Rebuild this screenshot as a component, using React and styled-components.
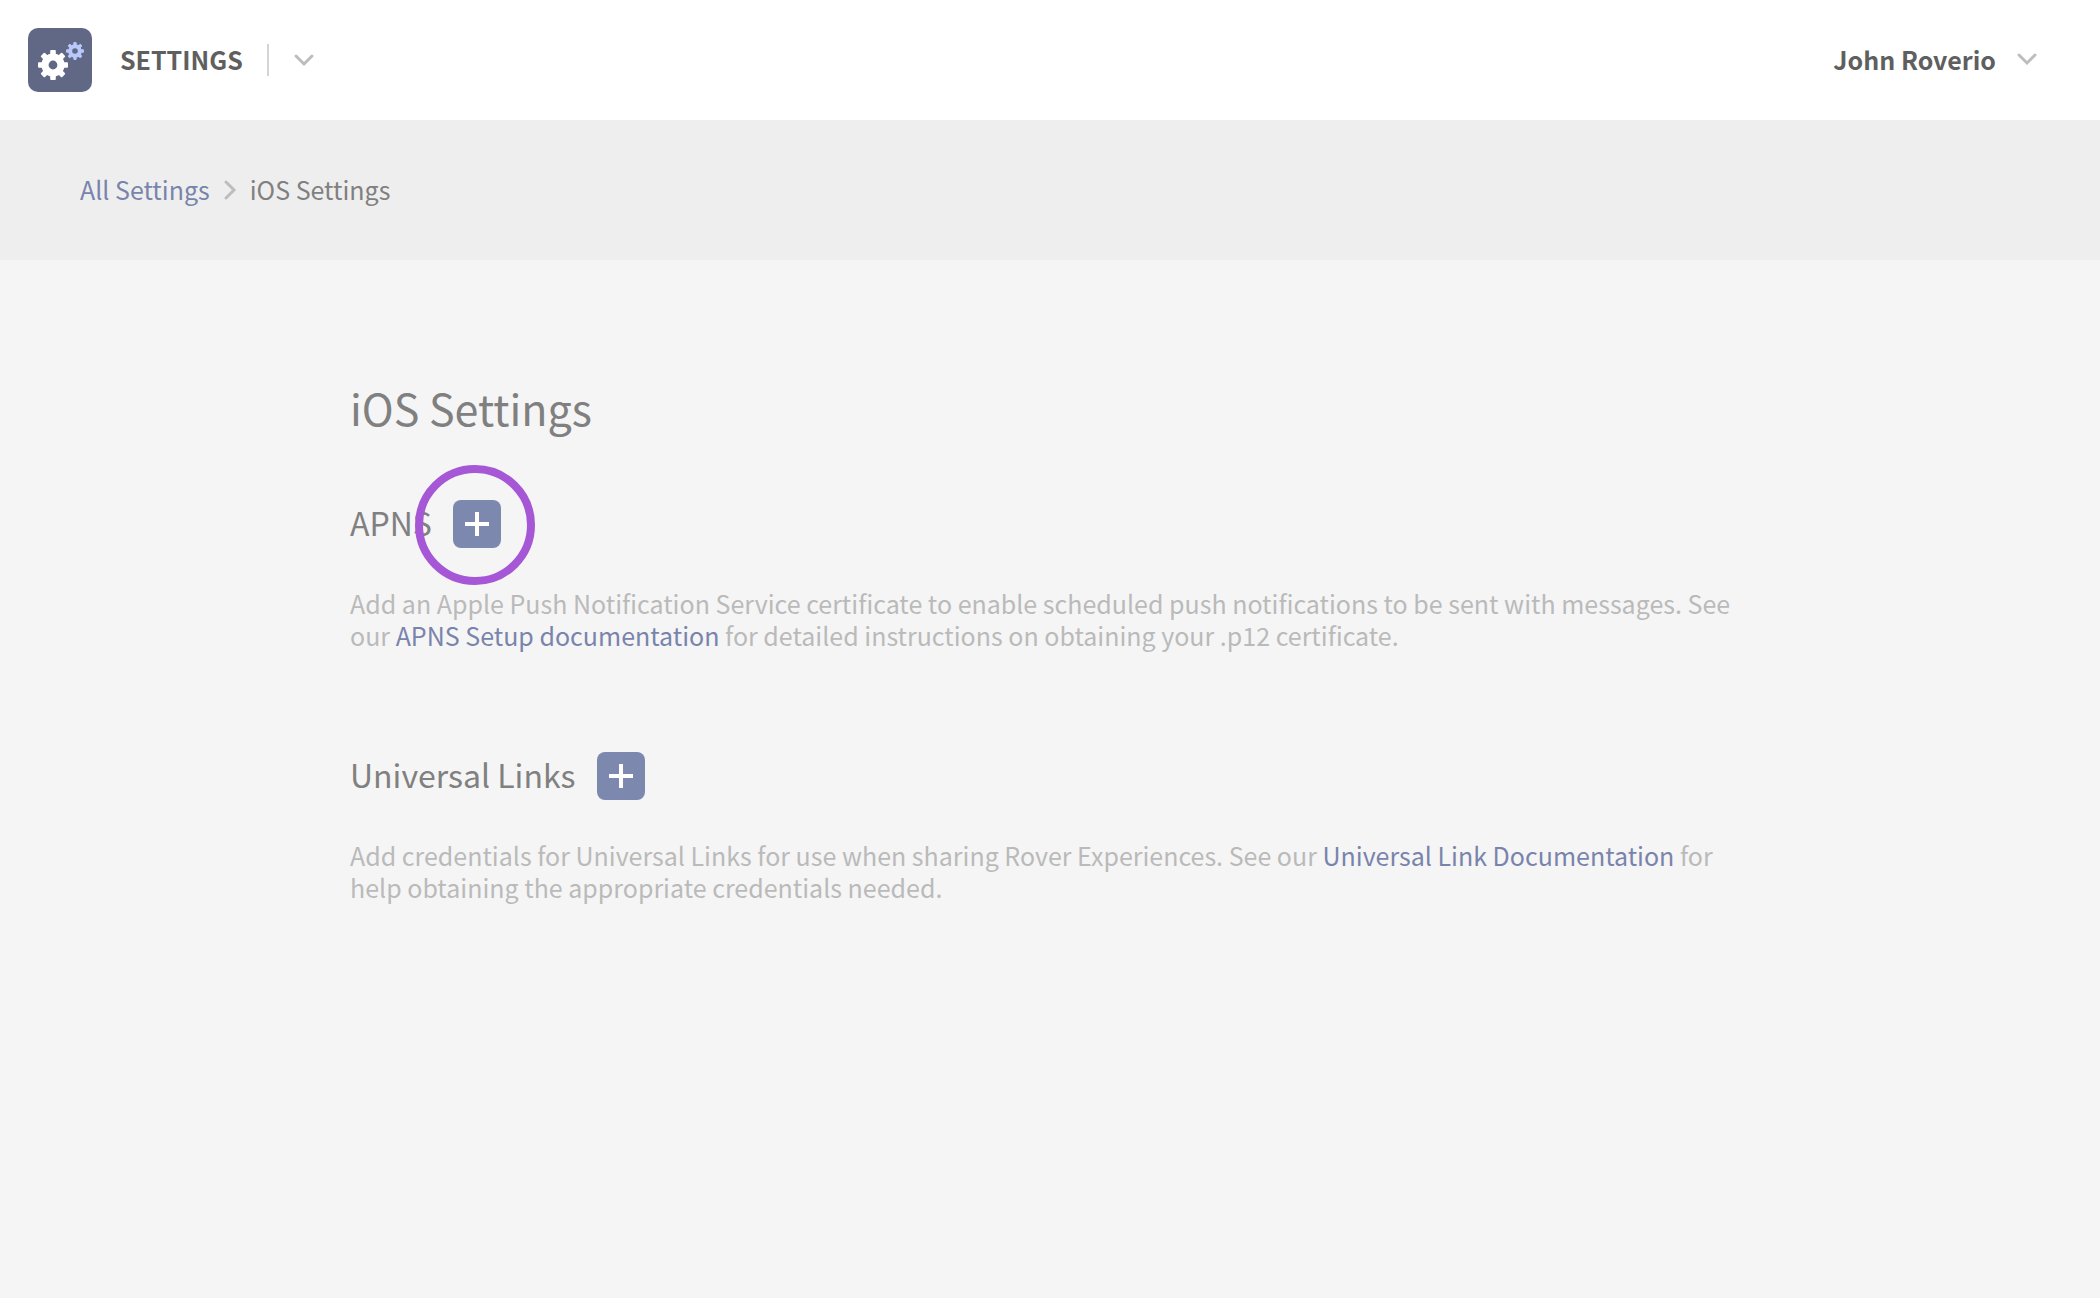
import React from "react";
import styled, { createGlobalStyle } from "styled-components";

const GlobalStyle = createGlobalStyle`
  *, *::before, *::after { box-sizing: border-box; }
  html { background: #f5f5f5; }
  body {
    margin: 0;
    background: #f5f5f5;
    color: #808080;
    font-family: "Noto Sans CJK SC", "Noto Sans", sans-serif;
    font-size: 25px;
    line-height: 32px;
  }
  button {
    margin: 0;
    padding: 0;
    border: 0;
    background: none;
    color: inherit;
    font: inherit;
    cursor: pointer;
  }
`;

const Header = styled.header`
  display: flex;
  align-items: center;
  justify-content: space-between;
  height: 120px;
  padding: 0 62px 0 28px;
  background: #ffffff;
  color: #5f5f5f;
  font-weight: 700;
`;

const Brand = styled.div`
  display: flex;
  align-items: center;
`;

const Logo = styled.svg`
  display: block;
  width: 64px;
  height: 64px;
  margin-right: 28px;
`;

const Label = styled.span`
  padding-bottom: 2px;
`;

const Divider = styled.span`
  width: 2px;
  height: 32px;
  margin: 0 24px;
  background: #d4d4d4;
`;

const IconButton = styled.button`
  display: flex;
`;

const UserButton = styled.button`
  && {
    display: flex;
    align-items: center;
    gap: 20px;
    padding-bottom: 2px;
    font-weight: 700;
  }
`;

const Icon = styled.svg`
  display: block;
  width: ${(p) => p.$width}px;
  height: ${(p) => p.$height}px;
  fill: none;
  stroke: #bdbdbd;
  stroke-width: 3;
  stroke-linecap: round;
`;

const Breadcrumbs = styled.nav`
  display: flex;
  align-items: center;
  gap: 12px;
  height: 140px;
  padding: 0 80px;
  background: #eeeeee;
`;

const Link = styled.a`
  color: #7984ac;
  text-decoration: none;
`;

const Main = styled.main`
  max-width: 1400px;
  margin: 0 auto;
  padding-top: 116px;
`;

const Title = styled.h1`
  margin: 0 0 62px;
  font-size: 43px;
  font-weight: 400;
  line-height: 62px;
`;

const Section = styled.section`
  margin-bottom: 101px;
`;

const SectionHead = styled.div`
  display: flex;
  align-items: flex-start;
  gap: 21px;
  margin-bottom: 39px;
`;

const SectionTitle = styled.h2`
  margin: 0;
  font-size: 32px;
  font-weight: 400;
  line-height: 44px;
`;

const AddSlot = styled.div`
  position: relative;
`;

const AddButton = styled.button`
  && {
    display: grid;
    place-items: center;
    width: 48px;
    height: 48px;
    border-radius: 8px;
    background: #7d88ae;
  }
`;

const Plus = styled.svg`
  width: 24px;
  height: 24px;
  stroke: #ffffff;
  stroke-width: 4;
`;

const Ring = styled.span`
  position: absolute;
  top: -35px;
  left: -38px;
  width: 120px;
  height: 120px;
  border: 8px solid #a557d6;
  border-radius: 50%;
  pointer-events: none;
`;

const Description = styled.p`
  margin: 0;
  color: #bababa;
`;

const ANGLES = [0, 45, 90, 135, 180, 225, 270, 315];

function Gear({ x, y, outer, body, hole, tooth, fill }) {
  return (
    <g transform={`translate(${x} ${y})`}>
      {ANGLES.map((a) => (
        <rect
          key={a}
          x={-tooth / 2}
          y={-outer}
          width={tooth}
          height={outer - hole}
          rx="1"
          fill={fill}
          transform={`rotate(${a})`}
        />
      ))}
      <circle r={body} fill={fill} />
      <circle r={hole} fill="#606886" />
    </g>
  );
}

function SettingsLogo() {
  return (
    <Logo viewBox="0 0 64 64" aria-hidden="true">
      <rect width="64" height="64" rx="10" fill="#606886" />
      <Gear x={25} y={37} outer={15} body={11.6} hole={4.4} tooth={5.6} fill="#ffffff" />
      <Gear x={47} y={23} outer={9} body={6.8} hole={2.8} tooth={3.4} fill="#b9c8fb" />
    </Logo>
  );
}

function ChevronDown() {
  return (
    <Icon $width={22} $height={14} viewBox="0 0 22 14" aria-hidden="true">
      <path d="M3 3l8 8 8-8" />
    </Icon>
  );
}

function ChevronRight() {
  return (
    <Icon $width={16} $height={22} viewBox="0 0 16 22" aria-hidden="true">
      <path d="M4 3l8 8-8 8" />
    </Icon>
  );
}

function SettingsSection({ title, highlighted, children }) {
  return (
    <Section>
      <SectionHead>
        <SectionTitle>{title}</SectionTitle>
        <AddSlot>
          <AddButton type="button" aria-label={`Add ${title}`}>
            <Plus viewBox="0 0 24 24" aria-hidden="true">
              <path d="M12 0v24M0 12h24" />
            </Plus>
          </AddButton>
          {highlighted && <Ring />}
        </AddSlot>
      </SectionHead>
      <Description>{children}</Description>
    </Section>
  );
}

export default function App() {
  return (
    <>
      <GlobalStyle />
      <Header>
        <Brand>
          <SettingsLogo />
          <Label>SETTINGS</Label>
          <Divider />
          <IconButton type="button" aria-label="Switch app">
            <ChevronDown />
          </IconButton>
        </Brand>
        <UserButton type="button">
          <span>John Roverio</span>
          <ChevronDown />
        </UserButton>
      </Header>
      <Breadcrumbs aria-label="Breadcrumb">
        <Label>
          <Link href="#settings">All Settings</Link>
        </Label>
        <ChevronRight />
        <Label aria-current="page">iOS Settings</Label>
      </Breadcrumbs>
      <Main>
        <Title>iOS Settings</Title>
        <SettingsSection title="APNS" highlighted>
          Add an Apple Push Notification Service certificate to enable scheduled push notifications
          to be sent with messages. See our{" "}
          <Link href="#apns-setup">APNS Setup documentation</Link> for detailed
          instructions on obtaining your .p12 certificate.
        </SettingsSection>
        <SettingsSection title="Universal Links">
          Add credentials for Universal Links for use when sharing Rover Experiences. See our{" "}
          <Link href="#universal-links">Universal Link Documentation</Link> for help
          obtaining the appropriate credentials needed.
        </SettingsSection>
      </Main>
    </>
  );
}
